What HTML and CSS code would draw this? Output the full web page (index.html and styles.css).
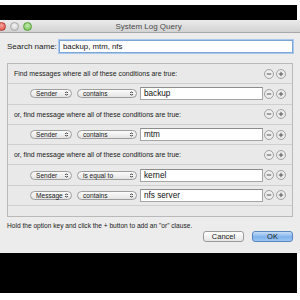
FILE: index.html
```html
<!DOCTYPE html>
<html lang="en">
<head>
  <meta charset="UTF-8" />
  <title>System Log Query</title>
  <link rel="stylesheet" href="styles.css">
</head>
<body>

  <div class="screen">
    <div class="window">
      <!-- Title bar -->
      <div class="titlebar">
        <div class="lights">
          <span class="light red"></span>
          <span class="light gray"></span>
          <span class="light green"></span>
        </div>
        <div class="title">System Log Query</div>
      </div>

      <div class="content">
        <div class="search-row">
          <span class="label">Search name:</span>
          <span class="field search-field">backup, mtm, nfs</span>
        </div>

        <!-- Rules -->
        <div class="panel">
          <div class="row header">
            <span class="caption">Find messages where all of these conditions are true:</span>
            <span class="round-btns">
              <svg width="10" height="10" viewBox="0 0 10 10"><circle cx="5" cy="5" r="4.5"/><path d="M2.8 5h4.4"/></svg>
              <svg width="10" height="10" viewBox="0 0 10 10"><circle cx="5" cy="5" r="4.5"/><path d="M2.8 5h4.4M5 2.8v4.4"/></svg>
            </span>
          </div>
          <div class="row cond">
            <span class="popup p-key">Sender<i></i></span>
            <span class="popup p-op">contains<i></i></span>
            <span class="field value">backup</span>
            <span class="round-btns">
              <svg width="10" height="10" viewBox="0 0 10 10"><circle cx="5" cy="5" r="4.5"/><path d="M2.8 5h4.4"/></svg>
              <svg width="10" height="10" viewBox="0 0 10 10"><circle cx="5" cy="5" r="4.5"/><path d="M2.8 5h4.4M5 2.8v4.4"/></svg>
            </span>
          </div>
          <div class="row header">
            <span class="caption">or, find message where all of these conditions are true:</span>
            <span class="round-btns">
              <svg width="10" height="10" viewBox="0 0 10 10"><circle cx="5" cy="5" r="4.5"/><path d="M2.8 5h4.4"/></svg>
              <svg width="10" height="10" viewBox="0 0 10 10"><circle cx="5" cy="5" r="4.5"/><path d="M2.8 5h4.4M5 2.8v4.4"/></svg>
            </span>
          </div>
          <div class="row cond">
            <span class="popup p-key">Sender<i></i></span>
            <span class="popup p-op">contains<i></i></span>
            <span class="field value">mtm</span>
            <span class="round-btns">
              <svg width="10" height="10" viewBox="0 0 10 10"><circle cx="5" cy="5" r="4.5"/><path d="M2.8 5h4.4"/></svg>
              <svg width="10" height="10" viewBox="0 0 10 10"><circle cx="5" cy="5" r="4.5"/><path d="M2.8 5h4.4M5 2.8v4.4"/></svg>
            </span>
          </div>
          <div class="row header">
            <span class="caption">or, find message where all of these conditions are true:</span>
            <span class="round-btns">
              <svg width="10" height="10" viewBox="0 0 10 10"><circle cx="5" cy="5" r="4.5"/><path d="M2.8 5h4.4"/></svg>
              <svg width="10" height="10" viewBox="0 0 10 10"><circle cx="5" cy="5" r="4.5"/><path d="M2.8 5h4.4M5 2.8v4.4"/></svg>
            </span>
          </div>
          <div class="row cond">
            <span class="popup p-key">Sender<i></i></span>
            <span class="popup p-op">is equal to<i></i></span>
            <span class="field value">kernel</span>
            <span class="round-btns">
              <svg width="10" height="10" viewBox="0 0 10 10"><circle cx="5" cy="5" r="4.5"/><path d="M2.8 5h4.4"/></svg>
              <svg width="10" height="10" viewBox="0 0 10 10"><circle cx="5" cy="5" r="4.5"/><path d="M2.8 5h4.4M5 2.8v4.4"/></svg>
            </span>
          </div>
          <div class="row cond">
            <span class="popup p-key">Message<i></i></span>
            <span class="popup p-op">contains<i></i></span>
            <span class="field value">nfs server</span>
            <span class="round-btns">
              <svg width="10" height="10" viewBox="0 0 10 10"><circle cx="5" cy="5" r="4.5"/><path d="M2.8 5h4.4"/></svg>
              <svg width="10" height="10" viewBox="0 0 10 10"><circle cx="5" cy="5" r="4.5"/><path d="M2.8 5h4.4M5 2.8v4.4"/></svg>
            </span>
          </div>
        </div>

        <p class="hint">Hold the option key and click the + button to add an "or" clause.</p>

        <div class="actions">
          <button class="btn">Cancel</button>
          <button class="btn ok">OK</button>
        </div>
      </div>
    </div>
  </div>

</body>
</html>
```

FILE: styles.css
```css
body {
  margin: 0;
  background: white;
  font-family: "Liberation Sans", Arial, sans-serif;
  overflow: hidden;
  width: 300px;
  height: 300px;
}

.screen {
  margin-top: 5px;
  width: 297px;
  height: 288px;
  background: #000;
  padding-top: 15px;
  box-sizing: border-box;
}

.window {
  margin-left: -3px;
  width: 303px;
  height: 233px;
  background: #ececec;
  overflow: hidden;
}

.titlebar {
  height: 13px;
  display: flex;
  align-items: center;
  background: linear-gradient(#ebebeb, #d2d2d2);
  border-bottom: 1px solid #a8a8a8;
  box-sizing: border-box;
}

.lights {
  display: flex;
  gap: 4px;
  width: 40px;
}

.light {
  width: 7px;
  height: 7px;
  border-radius: 50%;
}

.red {
  background: radial-gradient(circle at 50% 35%, #f7a39b, #d9473e);
  border: 0.5px solid #b33b33;
}

.gray {
  background: radial-gradient(circle at 50% 35%, #f4f4f4, #c8c8c8);
  border: 0.5px solid #a6a6a6;
}

.green {
  background: radial-gradient(circle at 50% 35%, #c4eab0, #6cbf4b);
  border: 0.5px solid #58a03a;
}

.title {
  flex: 1;
  text-align: center;
  font-size: 8px;
  color: #4a4a4a;
  margin-right: 40px;
}

.content {
  padding: 7px 7px 0 10px;
}

.search-row {
  display: flex;
  align-items: center;
  height: 13px;
}

.label {
  width: 52px;
  font-size: 8px;
  color: #1a1a1a;
}

.field {
  background: white;
  border: 1px solid #a5a5a5;
  border-top-color: #8c8c8c;
  box-sizing: border-box;
  height: 13px;
  font-size: 7.8px;
  line-height: 11px;
  padding-left: 3px;
  color: #111;
}

.search-field {
  flex: 1;
  border-color: #7ca6d8;
  box-shadow: 0 0 0 1px #a9c8ec;
}

.panel {
  margin-top: 10px;
  height: 154px;
  border: 1px solid #b9b9b9;
  background: #e9e9e9;
  box-sizing: border-box;
}

.row {
  display: flex;
  align-items: center;
  height: 20.3px;
  border-bottom: 1px solid #cfcfcf;
  box-sizing: border-box;
  padding-right: 6px;
}

.header {
  padding-left: 6px;
}

.caption {
  flex: 1;
  font-size: 6.9px;
  color: #1a1a1a;
}

.cond {
  padding-left: 22px;
}

.popup {
  display: flex;
  align-items: center;
  justify-content: space-between;
  height: 9px;
  box-sizing: border-box;
  border: 1px solid #9d9d9d;
  border-radius: 5px;
  background: linear-gradient(#fbfbfb, #e4e4e4);
  font-size: 6.6px;
  color: #1a1a1a;
  padding: 0 3px 0 5px;
}

.popup i {
  width: 3px;
  height: 5px;
  flex-shrink: 0;
  background:
    linear-gradient(to bottom right, transparent 50%, #555 50%) 0 0 / 1.5px 2px no-repeat,
    linear-gradient(to bottom left, transparent 50%, #555 50%) 1.5px 0 / 1.5px 2px no-repeat,
    linear-gradient(to top right, transparent 50%, #555 50%) 0 3px / 1.5px 2px no-repeat,
    linear-gradient(to top left, transparent 50%, #555 50%) 1.5px 3px / 1.5px 2px no-repeat;
}

.p-key {
  width: 42px;
}

.p-op {
  width: 60px;
  margin-left: 5px;
}

.value {
  width: 123px;
  margin-left: 3px;
  font-size: 8.2px;
}

.round-btns {
  display: flex;
  gap: 2px;
  margin-left: auto;
}

.round-btns circle {
  fill: #ededed;
  stroke: #8f8f8f;
  stroke-width: 0.8;
}

.round-btns path {
  stroke: #555;
  stroke-width: 1;
}

.hint {
  margin: 4px 0 0 0;
  font-size: 6.6px;
  color: #1a1a1a;
  line-height: 10px;
}

.actions {
  display: flex;
  justify-content: flex-end;
  gap: 8px;
}

.btn {
  width: 41px;
  height: 11px;
  padding: 0;
  border: 1px solid #9a9a9a;
  border-radius: 3px;
  background: linear-gradient(#ffffff, #e6e6e6);
  font-family: "Liberation Sans", Arial, sans-serif;
  font-size: 7.5px;
  color: #1a1a1a;
}

.ok {
  border-color: #5a86c0;
  background: linear-gradient(#c7def7, #7fb2ec 55%, #9cc6f3);
}
```
